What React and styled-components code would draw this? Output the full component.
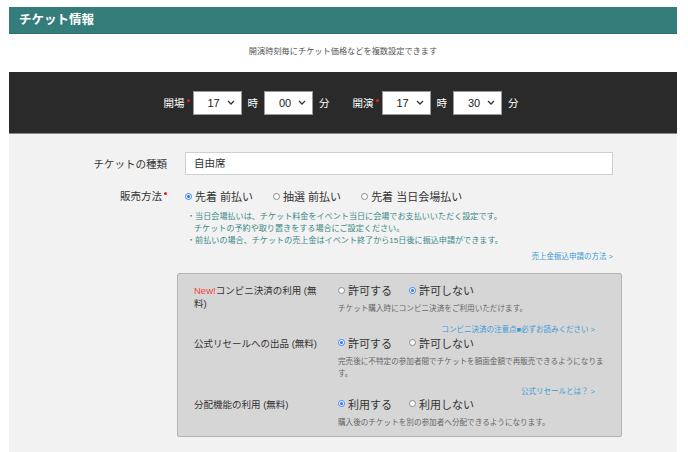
import React from 'react';
import styled, { createGlobalStyle } from 'styled-components';

const GlobalStyle = createGlobalStyle`
  body {
    margin: 0;
    background: #ffffff;
    font-family: "Liberation Sans", "Noto Sans CJK JP", sans-serif;
    color: #333;
  }
`;

const Page = styled.div`
  padding: 7px 11px 0 9px;
  width: 668px;
`;

const Header = styled.h2`
  margin: 0;
  height: 26px;
  background: #357d7a;
  color: #fff;
  font-size: 12.5px;
  font-weight: bold;
  line-height: 26px;
  padding-left: 10px;
  border-bottom: 1px solid #2e6e6b;
`;

const Lead = styled.p`
  margin: 0;
  height: 38px;
  line-height: 36px;
  text-align: center;
  font-size: 8.2px;
  color: #555;
`;

const TimeBand = styled.div`
  height: 61px;
  background: #2a2a2a;
  display: flex;
  align-items: center;
  justify-content: center;
  padding-right: 4px;
  border-bottom: 1px solid #888;
`;

const TimeGroup = styled.div`
  display: flex;
  align-items: center;
  margin-right: ${(p) => p.$gap || 0}px;
`;

const TimeLabel = styled.span`
  color: #fff;
  font-size: 10.5px;
  margin: 0 ${(p) => p.$mr ?? 6}px 0 ${(p) => p.$ml || 0}px;
`;

const Req = styled.span`
  display: inline-block;
  width: 3px;
  height: 3px;
  border-radius: 50%;
  background: #e02020;
  margin-left: 2px;
  vertical-align: 5px;
`;

const SelectBox = styled.div`
  width: 49px;
  height: 24px;
  background: #fff;
  border: 1px solid #999;
  box-sizing: border-box;
  display: flex;
  align-items: center;
  justify-content: space-between;
  padding: 0 6px 0 14px;
  font-size: 11px;
  color: #222;
`;

const Body = styled.div`
  background: #f2f2f2;
  padding: 18px 0 14px;
  min-height: 305px;
`;

const Row = styled.div`
  display: grid;
  grid-template-columns: 168px 1fr;
  column-gap: 8px;
  align-items: ${(p) => p.$align || 'center'};
  margin-bottom: ${(p) => p.$mb || 0}px;
  padding-right: 64px;
`;

const Label = styled.div`
  text-align: right;
  font-size: 10.5px;
  color: #333;
  padding-right: 10px;
`;

const TextInput = styled.div`
  height: 23px;
  box-sizing: border-box;
  border: 1px solid #cfcfcf;
  background: #fff;
  font-size: 10.5px;
  line-height: 21px;
  padding-left: 8px;
  color: #333;
`;

const RadioRow = styled.div`
  display: flex;
  align-items: center;
  gap: ${(p) => p.$gap || 11}px;
`;

const RadioItem = styled.label`
  display: flex;
  align-items: center;
  font-size: ${(p) => p.$size || 10.5}px;
  color: #333;
`;

const Dot = styled.span`
  width: 7px;
  height: 7px;
  border-radius: 50%;
  box-sizing: border-box;
  background: #fff;
  border: 1px solid ${(p) => (p.$on ? '#3b82f6' : '#8a8a8a')};
  margin-right: 3px;
  display: flex;
  align-items: center;
  justify-content: center;
  &::after {
    content: '';
    width: 3px;
    height: 3px;
    border-radius: 50%;
    background: ${(p) => (p.$on ? '#2a6fe8' : 'transparent')};
  }
`;

const Notes = styled.div`
  margin: 7px 0 0 2px;
  font-size: 8.1px;
  line-height: 12px;
  color: #3a8a86;
`;

const Indent = styled.div`
  padding-left: 7px;
`;

const LinkLine = styled.div`
  text-align: right;
  font-size: 7.5px;
  color: #3c9ad6;
  margin-top: ${(p) => p.$mt || 0}px;
  margin-bottom: ${(p) => p.$mb || 0}px;
`;

const OptionBox = styled.div`
  margin: 0 55px 0 168px;
  background: #d6d6d6;
  border: 1px solid #b4b4b4;
  border-radius: 2px;
  padding: 8px 26px 7px 16px;
`;

const OptRow = styled.div`
  display: grid;
  grid-template-columns: 144px 1fr;
  align-items: start;
`;

const OptLabel = styled.div`
  font-size: 9.5px;
  line-height: 13px;
  color: #333;
  padding-top: 2px;
  max-width: 124px;
`;

const New = styled.span`
  color: #f0443a;
`;

const Sub = styled.div`
  font-size: 7.6px;
  line-height: 12.5px;
  color: #666;
  margin-top: 5px;
  margin-right: -14px;
`;

function Select({ value }) {
  return (
    <SelectBox>
      <span>{value}</span>
      <svg width="8" height="5" viewBox="0 0 8 5">
        <path d="M1 1l3 3 3-3" fill="none" stroke="#333" strokeWidth="1.3" />
      </svg>
    </SelectBox>
  );
}

function Radio({ on, children, size }) {
  return (
    <RadioItem $size={size}>
      <Dot $on={on} />
      {children}
    </RadioItem>
  );
}

export default function App() {
  return (
    <>
      <GlobalStyle />
      <Page>
        <Header>チケット情報</Header>
        <Lead>開演時刻毎にチケット価格などを複数設定できます</Lead>
        <TimeBand>
          <TimeGroup $gap={23}>
            <TimeLabel $mr={3}>
              開場<Req />
            </TimeLabel>
            <Select value="17" />
            <TimeLabel $ml={6}>時</TimeLabel>
            <Select value="00" />
            <TimeLabel $ml={6} $mr={0}>分</TimeLabel>
          </TimeGroup>
          <TimeGroup>
            <TimeLabel $mr={3}>
              開演<Req />
            </TimeLabel>
            <Select value="17" />
            <TimeLabel $ml={6}>時</TimeLabel>
            <Select value="30" />
            <TimeLabel $ml={6} $mr={0}>分</TimeLabel>
          </TimeGroup>
        </TimeBand>
        <Body>
          <Row $mb={13}>
            <Label>チケットの種類</Label>
            <TextInput>自由席</TextInput>
          </Row>
          <Row $align="start">
            <Label>
              販売方法<Req />
            </Label>
            <div>
              <RadioRow $gap={20}>
                <Radio on size={11}>先着 前払い</Radio>
                <Radio size={11}>抽選 前払い</Radio>
                <Radio size={11}>先着 当日会場払い</Radio>
              </RadioRow>
              <Notes>
                <div>・当日会場払いは、チケット料金をイベント当日に会場でお支払いいただく設定です。</div>
                <Indent>チケットの予約や取り置きをする場合にご設定ください。</Indent>
                <div>・前払いの場合、チケットの売上金はイベント終了から15日後に振込申請ができます。</div>
              </Notes>
              <LinkLine $mt={3}>売上金振込申請の方法 &gt;</LinkLine>
            </div>
          </Row>
          <div style={{ height: 12 }} />
          <OptionBox>
            <OptRow>
              <OptLabel>
                <New>New!</New>コンビニ決済の利用 (無料)
              </OptLabel>
              <div>
                <RadioRow $gap={17}>
                  <Radio size={11}>許可する</Radio>
                  <Radio on size={11}>許可しない</Radio>
                </RadioRow>
                <Sub>チケット購入時にコンビニ決済をご利用いただけます。</Sub>
              </div>
            </OptRow>
            <LinkLine $mt={7} $mb={1}>コンビニ決済の注意点■必ずお読みください &gt;</LinkLine>
            <OptRow>
              <OptLabel>公式リセールへの出品 (無料)</OptLabel>
              <div>
                <RadioRow $gap={17}>
                  <Radio on size={11}>許可する</Radio>
                  <Radio size={11}>許可しない</Radio>
                </RadioRow>
                <Sub>完売後に不特定の参加者間でチケットを額面金額で再販売できるようになります。</Sub>
              </div>
            </OptRow>
            <LinkLine $mt={4} $mb={0}>公式リセールとは？ &gt;</LinkLine>
            <OptRow>
              <OptLabel>分配機能の利用 (無料)</OptLabel>
              <div>
                <RadioRow $gap={17}>
                  <Radio on size={11}>利用する</Radio>
                  <Radio size={11}>利用しない</Radio>
                </RadioRow>
                <Sub>購入後のチケットを別の参加者へ分配できるようになります。</Sub>
              </div>
            </OptRow>
          </OptionBox>
        </Body>
      </Page>
    </>
  );
}
